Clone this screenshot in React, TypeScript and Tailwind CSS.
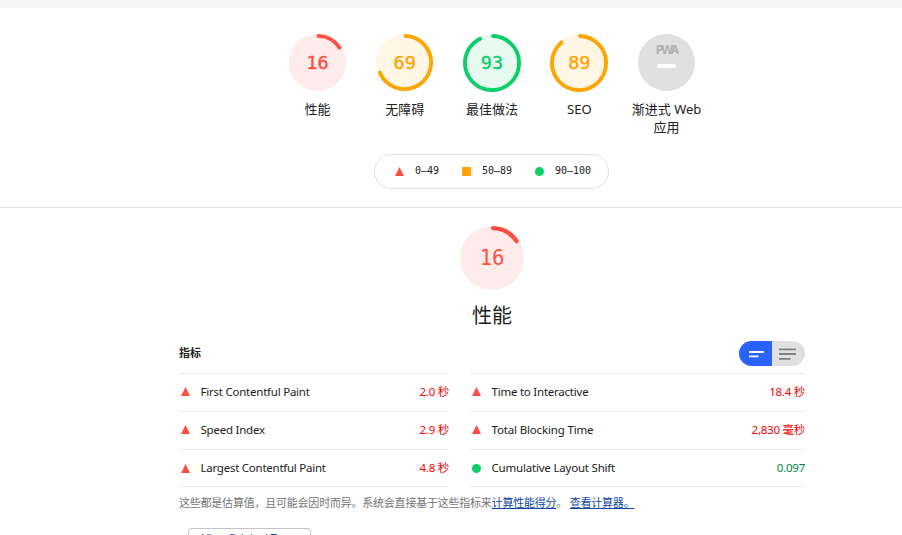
import type { ReactNode } from "react";

const sans = "font-['Noto_Sans','Noto_Sans_CJK_SC',sans-serif]";

const red = { stroke: "#ff4e42", fill: "#ffecea" };
const orange = { stroke: "#ffa400", fill: "#fff6e6" };
const green = { stroke: "#0cce6b", fill: "#e6faf0" };

type Tone = { stroke: string; fill: string };

function Gauge({ score, tone, size, font }: { score: number; tone: Tone; size: string; font: string }) {
  const len = 2 * Math.PI * 56;
  return (
    <div className={`grid place-items-center ${size}`}>
      <svg viewBox="0 0 120 120" className="col-start-1 row-start-1 size-full">
        <circle cx="60" cy="60" r="60" fill={tone.fill} />
        <circle
          cx="60"
          cy="60"
          r="56"
          fill="none"
          stroke={tone.stroke}
          strokeWidth="8"
          strokeLinecap="round"
          strokeDasharray={`${(score / 100) * len - 4} ${len}`}
          transform="rotate(-88 60 60)"
        />
      </svg>
      <span className={`col-start-1 row-start-1 ${font}`} style={{ color: tone.stroke }}>
        {score}
      </span>
    </div>
  );
}

function PwaGauge() {
  return (
    <div className="flex size-[57px] flex-col items-center rounded-full bg-[#e0e0e0] pt-[9px]">
      <span className="text-[12px] font-bold leading-[14px] tracking-[-1.8px] text-[#b0b0b0]">PWA</span>
      <span className="mt-[7px] h-[4px] w-[19px] rounded-full bg-white" />
    </div>
  );
}

function Category({ label, children }: { label: ReactNode; children: ReactNode }) {
  return (
    <div className="flex w-[87.3px] flex-col items-center">
      {children}
      <div className="mt-[9px] text-center text-[13px] leading-[18px] text-[#212121]">{label}</div>
    </div>
  );
}

const Triangle = () => (
  <svg viewBox="0 0 9 9" className="size-[9px] shrink-0">
    <path d="M4.5 0L9 9H0z" fill="#ff4e42" />
  </svg>
);
const Dot = () => <span className="size-[9px] shrink-0 rounded-full bg-[#0cce6b]" />;

function Metric({ name, value, track, good }: { name: string; value: string; track: string; good?: boolean }) {
  return (
    <div className="flex h-[38px] items-center border-t border-[#ebebeb] pb-[2px] pl-[2px] text-[11.5px] last:border-b last:pb-0">
      {good ? <Dot /> : <Triangle />}
      <span className={`ml-[10.5px] whitespace-nowrap text-[#212121] ${track}`}>{name}</span>
      <span className={`ml-auto whitespace-nowrap tracking-[-0.25px] ${good ? "text-[#018642]" : "text-[#f50000]"}`}>{value}</span>
    </div>
  );
}

export default function App() {
  const small = "font-['DejaVu_Sans_Mono',monospace] text-[18.5px] pt-px [-webkit-text-stroke:0.4px]";
  const smallUp = "font-['DejaVu_Sans_Mono',monospace] text-[18.5px] pb-px [-webkit-text-stroke:0.4px]";
  return (
    <div className={`h-[535px] w-[902px] overflow-hidden bg-white ${sans}`}>
      <div className="h-2 bg-[#f5f5f5]" />
      <header className="flex h-[200px] flex-col items-center border-b border-[#e0e0e0] pl-[82px] pt-[26px]">
        <div className="flex h-[120px]">
          <Category label="性能"><Gauge score={16} tone={red} size="size-[57px]" font={small} /></Category>
          <Category label="无障碍"><Gauge score={69} tone={orange} size="size-[57px]" font={small} /></Category>
          <Category label="最佳做法"><Gauge score={93} tone={green} size="size-[58px] -mb-px" font={smallUp} /></Category>
          <Category label="SEO"><Gauge score={89} tone={orange} size="size-[58px] -mb-px" font={smallUp} /></Category>
          <Category label={<>渐进式 Web<br />应用</>}><PwaGauge /></Category>
        </div>
        <div className="mr-px flex h-[35px] w-[235px] items-center rounded-full border border-[#e0e0e0] pl-5 font-['DejaVu_Sans_Mono',monospace] text-[10px] text-[#212121]">
          <Triangle /><span className="ml-[11px] w-[47px] pb-0.5">0–49</span>
          <span className="size-[9px] bg-[#ffa400]" /><span className="ml-[11px] w-[53px] pb-0.5">50–89</span>
          <Dot /><span className="ml-[11px] pb-0.5">90–100</span>
        </div>
      </header>

      <main className="ml-[179px] w-[626px]">
        <div className="flex h-[133px] flex-col items-center pt-[18px]">
          <Gauge score={16} tone={red} size="size-[64px]" font="font-['DejaVu_Sans_Mono',monospace] text-[20.5px] pt-px" />
          <h1 className="mt-[12px] text-[20px] leading-[28px] text-[#212121]">性能</h1>
        </div>
        <div className="flex h-[32px] justify-between">
          <h2 className="pt-[4px] text-[11px] font-bold leading-[16px] text-[#212121]">指标</h2>
          <div className="flex h-[25px] w-[66px] overflow-hidden rounded-full">
            <svg viewBox="0 0 33 25" className="h-[25px] w-[33px] bg-[#2962ff]">
              <path d="M10 11h15M10 15.3h9.5" stroke="#fff" strokeWidth="1.8" />
            </svg>
            <svg viewBox="0 0 33 25" className="h-[25px] w-[33px] bg-[#e0e0e0]">
              <path d="M7 8.4h17M7 13h17M7 17.9h11.5" stroke="#808080" strokeWidth="1.9" />
            </svg>
          </div>
        </div>
        <div className="grid grid-cols-[270px_335px] gap-x-[21px]">
          <div>
            <Metric name="First Contentful Paint" value="2.0 秒" track="tracking-[-0.23px]" />
            <Metric name="Speed Index" value="2.9 秒" track="tracking-[-0.23px]" />
            <Metric name="Largest Contentful Paint" value="4.8 秒" track="tracking-[-0.25px]" />
          </div>
          <div>
            <Metric name="Time to Interactive" value="18.4 秒" track="tracking-[-0.23px]" />
            <Metric name="Total Blocking Time" value="2,830 毫秒" track="tracking-[-0.16px]" />
            <Metric name="Cumulative Layout Shift" value="0.097" track="tracking-[-0.2px]" good />
          </div>
        </div>
        <p className="mt-[8px] whitespace-nowrap text-[11px] leading-[16px] tracking-[-0.22px] text-[#757575]">
          这些都是估算值，且可能会因时而异。系统会直接基于这些指标来<a className="text-[#0d47a1] underline">计算性能得分</a>。 <a className="text-[#0d47a1] underline">查看计算器。</a>
        </p>
        <button className="ml-[9px] mt-[17px] flex h-[30px] w-[123px] justify-center rounded-[3px] border border-[#c4c4c4] pt-[2px] text-[11px] leading-[13px] tracking-[-0.2px] text-[#0d47a1]">
          View Original Trace
        </button>
      </main>
    </div>
  );
}
